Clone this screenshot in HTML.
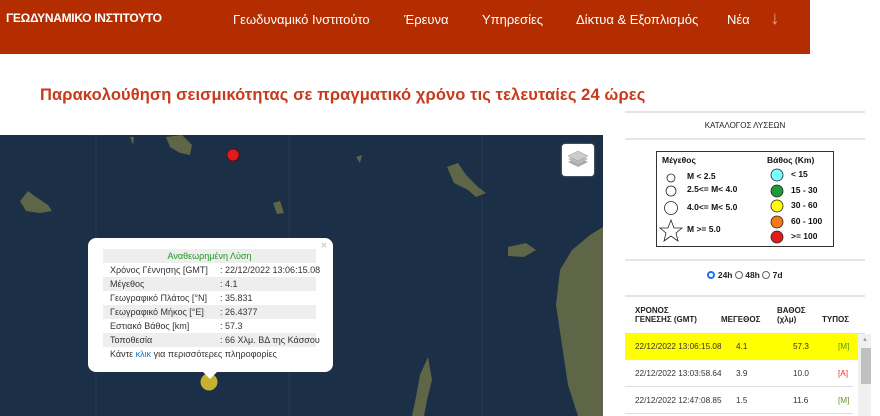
<!DOCTYPE html>
<html><head><meta charset="utf-8"><style>
*{margin:0;padding:0;box-sizing:border-box}
body{width:880px;height:416px;overflow:hidden;background:#fff;font-family:"Liberation Sans",sans-serif;position:relative}
.nav{position:absolute;left:0;top:0;width:810px;height:54px;background:#b32d00}
.nav span{position:absolute;top:12px;color:#fff;font-size:13px}
.logo{left:6px;font-weight:bold;font-size:12px!important;top:11px!important;letter-spacing:-0.3px}
h1{position:absolute;left:40px;top:86px;font-size:16.5px;color:#c9391a;font-weight:bold;letter-spacing:0.1px}
.map{position:absolute;left:0;top:135px;width:603px;height:281px;background:#1b2f47;overflow:hidden}
.pop{position:absolute;left:88px;top:238px;width:245px;height:134px;background:#fff;border-radius:8px;font-size:9px;color:#333}
.row{position:absolute;left:15px;width:213px;height:14px;line-height:14px;white-space:nowrap}
.row.g{background:#eee}
.row .k{position:absolute;left:7px}
.row .v{position:absolute;left:117px}
.hr{position:absolute;left:625px;width:240px;height:2px;background:#e2e6ea}
.tbl{position:absolute;left:625px;width:240px;font-size:8.2px;color:#333}
</style></head><body>
<div class="nav">
<span class="logo">ΓΕΩΔΥΝΑΜΙΚΟ ΙΝΣΤΙΤΟΥΤΟ</span>
<span style="left:233px">Γεωδυναμικό Ινστιτούτο</span>
<span style="left:404px">Έρευνα</span>
<span style="left:482px">Υπηρεσίες</span>
<span style="left:576px">Δίκτυα &amp; Εξοπλισμός</span>
<span style="left:727px">Νέα</span>
<span style="left:770px;top:8px;font-size:19px;color:#e8a080">↓</span>
</div>
<h1>Παρακολούθηση σεισμικότητας σε πραγματικό χρόνο τις τελευταίες 24 ώρες</h1>
<div class="map">
<svg width="603" height="281" style="position:absolute;left:0;top:0">
<g stroke="#2c4058" stroke-width="0.6"><line x1="96" y1="0" x2="96" y2="281"/><line x1="289" y1="0" x2="289" y2="281"/><line x1="482" y1="0" x2="482" y2="281"/></g>
<g fill="#5f6648">
<path d="M166 2 L182 0 L192 10 L190 20 L180 18 L170 12Z"/>
<path d="M20 66 L28 56 L36 62 L48 70 L52 76 L40 78 L26 76Z"/>
<path d="M447 32 L458 28 L466 40 L478 52 L486 58 L476 62 L468 55 L454 48Z"/>
<path d="M273 68 L280 66 L284 78 L277 79Z"/>
<path d="M508 112 L526 108 L536 115 L524 122 L508 121Z"/>
<path d="M560 135 L572 115 L590 100 L603 92 L603 281 L578 281 L568 250 L562 210 L556 170Z"/>
<path d="M420 240 L428 222 L432 245 L427 265 L424 281 L412 281 L416 262Z"/>
<path d="M356 22 L362 20 L360 28Z"/>
<path d="M130 2 L134 2 L133 10Z"/>
</g>
<circle cx="233" cy="20" r="6" fill="#e01b1b" stroke="#600" stroke-width="0.8"/>
<circle cx="209" cy="247" r="8.5" fill="#c8b030"/>
</svg>
<div style="position:absolute;left:562px;top:9px;width:32px;height:32px;background:#fff;border-radius:3px;box-shadow:0 0 2px #888"><svg width="32" height="32"><path d="M6 18 L16 13 L26 18 L16 23Z" fill="#aaa"/><path d="M6 15 L16 10 L26 15 L16 20Z" fill="#bbb"/><path d="M6 12 L16 7 L26 12 L16 17Z" fill="#ccc" stroke="#999" stroke-width=".5"/></svg></div>
</div>
<div class="pop">
<span style="position:absolute;right:6px;top:2px;color:#bbb;font-size:11px">×</span>
<div class="row g" style="top:11px;text-align:center;color:#1c9a1c">Αναθεωρημένη Λύση</div>
<div class="row" style="top:25px"><span class="k">Χρόνος Γέννησης [GMT]</span><span class="v">: 22/12/2022 13:06:15.08</span></div>
<div class="row g" style="top:39px"><span class="k">Μέγεθος</span><span class="v">: 4.1</span></div>
<div class="row" style="top:53px"><span class="k">Γεωγραφικό Πλάτος [°N]</span><span class="v">: 35.831</span></div>
<div class="row g" style="top:67px"><span class="k">Γεωγραφικό Μήκος [°E]</span><span class="v">: 26.4377</span></div>
<div class="row" style="top:81px"><span class="k">Εστιακό Βάθος [km]</span><span class="v">: 57.3</span></div>
<div class="row g" style="top:95px"><span class="k">Τοποθεσία</span><span class="v">: 66 Χλμ. ΒΔ της Κάσσου</span></div>
<div class="row" style="top:109px"><span class="k">Κάντε <span style="color:#1a78c2">κλικ</span> για περισσότερες πληροφορίες</span></div>
<div style="position:absolute;left:115px;bottom:-7px;width:0;height:0;border-left:7px solid transparent;border-right:7px solid transparent;border-top:7px solid #fff"></div>
</div>
<div class="hr" style="top:111px"></div>
<div style="position:absolute;left:625px;top:121px;width:240px;text-align:center;font-size:8px;color:#222">ΚΑΤΑΛΟΓΟΣ ΛΥΣΕΩΝ</div>
<div class="hr" style="top:138px"></div>
<div style="position:absolute;left:656px;top:151px;width:178px;height:96px;border:1.5px solid #333;font-size:8.5px;font-weight:bold;color:#111">
<div style="position:absolute;left:5px;top:3px">Μέγεθος</div>
<div style="position:absolute;left:110px;top:3px">Βάθος (Km)</div>
<svg width="178" height="96" style="position:absolute;left:0;top:0" stroke="#222" stroke-width="0.8">
<circle cx="14" cy="26" r="4" fill="#fff"/><circle cx="14" cy="39" r="5" fill="#fff"/><circle cx="14" cy="56" r="6.5" fill="#fff"/>
<path d="M14 68 L17 76 L25 76 L19 81 L21 89 L14 84 L7 89 L9 81 L3 76 L11 76Z" fill="#fff"/>
<circle cx="120" cy="23" r="6" fill="#7ff"/><circle cx="120" cy="39" r="6" fill="#1e9a3a"/><circle cx="120" cy="54" r="6" fill="#ff0"/><circle cx="120" cy="70" r="6" fill="#f57a1a"/><circle cx="120" cy="85" r="6" fill="#e01b1b"/>
</svg>
<div style="position:absolute;left:30px;top:19px">M &lt; 2.5</div>
<div style="position:absolute;left:30px;top:32px">2.5&lt;= M&lt; 4.0</div>
<div style="position:absolute;left:30px;top:50px">4.0&lt;= M&lt; 5.0</div>
<div style="position:absolute;left:30px;top:72px">M &gt;= 5.0</div>
<div style="position:absolute;left:134px;top:17px">&lt; 15</div>
<div style="position:absolute;left:134px;top:33px">15 - 30</div>
<div style="position:absolute;left:134px;top:48px">30 - 60</div>
<div style="position:absolute;left:134px;top:64px">60 - 100</div>
<div style="position:absolute;left:134px;top:79px">&gt;= 100</div>
</div>
<div class="hr" style="top:259px"></div>
<div style="position:absolute;left:625px;top:270px;width:240px;text-align:center;font-size:8.5px;font-weight:bold;color:#222"><span style="display:inline-block;width:8px;height:8px;border-radius:50%;border:2.5px solid #1a73e8;vertical-align:-1px"></span> 24h <span style="display:inline-block;width:8px;height:8px;border-radius:50%;border:1px solid #666;vertical-align:-1px"></span> 48h <span style="display:inline-block;width:8px;height:8px;border-radius:50%;border:1px solid #666;vertical-align:-1px"></span> 7d</div>
<div class="hr" style="top:295px"></div>
<div class="tbl" style="top:306px;font-size:8px;font-weight:bold;color:#222">
<div style="position:absolute;left:10px;top:0">ΧΡΟΝΟΣ<br>ΓΕΝΕΣΗΣ (GMT)</div>
<div style="position:absolute;left:96px;top:9px">ΜΕΓΕΘΟΣ</div>
<div style="position:absolute;left:152px;top:0">ΒΑΘΟΣ<br>(χλμ)</div>
<div style="position:absolute;left:197px;top:9px">ΤΥΠΟΣ</div>
</div>
<div style="position:absolute;left:625px;top:333px;width:240px;height:1px;background:#ddd"></div>
<div class="tbl" style="top:334px;height:26px;width:233px;background:#ffff00">
<span style="position:absolute;left:10px;top:8px">22/12/2022 13:06:15.08</span><span style="position:absolute;left:111px;top:8px">4.1</span><span style="position:absolute;left:168px;top:8px">57.3</span><span style="position:absolute;left:213px;top:8px;color:#5a9a1a">[M]</span></div>
<div class="tbl" style="top:361px;height:26px;border-bottom:1px solid #ddd;width:228px">
<span style="position:absolute;left:10px;top:8px">22/12/2022 13:03:58.64</span><span style="position:absolute;left:111px;top:8px">3.9</span><span style="position:absolute;left:168px;top:8px">10.0</span><span style="position:absolute;left:213px;top:8px;color:#e03030">[A]</span></div>
<div class="tbl" style="top:388px;height:26px;border-bottom:1px solid #ddd;width:228px">
<span style="position:absolute;left:10px;top:8px">22/12/2022 12:47:08.85</span><span style="position:absolute;left:111px;top:8px">1.5</span><span style="position:absolute;left:168px;top:8px">11.6</span><span style="position:absolute;left:213px;top:8px;color:#5a9a1a">[M]</span></div>
<div style="position:absolute;left:858px;top:334px;width:13px;height:82px;background:#f0f0f0"></div>
<div style="position:absolute;left:861px;top:348px;width:10px;height:36px;background:#c0c0c0"></div>
<div style="position:absolute;left:862px;top:337px;font-size:6px;color:#999">▲</div>
</body></html>
